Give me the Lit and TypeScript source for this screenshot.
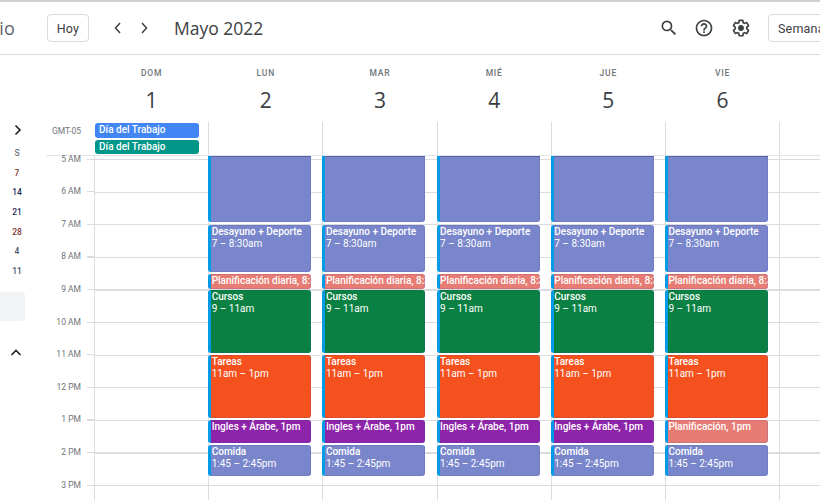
import { LitElement, html, css } from "lit";
import { customElement } from "lit/decorators.js";

const HOUR = 32.6;
const BLUE = "#7986cb", RED = "#e67c73", GREEN = "#0b8043", ORANGE = "#f4511e", PURPLE = "#8e24aa";
interface Ev { top: number; h: number; c: string; t: string; s?: string; flat?: boolean; }
const base: Ev[] = [
  { top: 0, h: 66, c: BLUE, t: "", flat: true },
  { top: 69, h: 47, c: BLUE, t: "Desayuno + Deporte", s: "7 – 8:30am" },
  { top: 118, h: 15, c: RED, t: "Planificación diaria, 8:30am" },
  { top: 134, h: 63, c: GREEN, t: "Cursos", s: "9 – 11am" },
  { top: 199, h: 63, c: ORANGE, t: "Tareas", s: "11am – 1pm" },
  { top: 264, h: 23, c: PURPLE, t: "Ingles + Árabe, 1pm" },
  { top: 289, h: 31, c: BLUE, t: "Comida", s: "1:45 – 2:45pm" },
];
const days = [
  { n: "DOM", d: 1 }, { n: "LUN", d: 2 }, { n: "MAR", d: 3 },
  { n: "MIÉ", d: 4 }, { n: "JUE", d: 5 }, { n: "VIE", d: 6 },
];
const hours = ["5 AM","6 AM","7 AM","8 AM","9 AM","10 AM","11 AM","12 PM","1 PM","2 PM","3 PM"];
const mini = [
  { t: "S", c: "head" }, { t: "7", c: "r" }, { t: "14", c: "b" }, { t: "21", c: "b" },
  { t: "28", c: "r" }, { t: "4", c: "m" }, { t: "11", c: "m" },
];

@customElement("app-root")
export class AppRoot extends LitElement {
  static styles = css`
    :host { display: block; width: 820px; height: 500px; overflow: hidden; background: #fff; font-family: Roboto, "Liberation Sans", sans-serif; color: #3c4043; }
    .top { height: 52px; border-top: 2px solid #d0d0d0; border-bottom: 1px solid #dadce0; display: flex; align-items: center; overflow: hidden; }
    .brand { width: 47px; flex: none; overflow: hidden; white-space: nowrap; color: #5f6368; font: 400 18px "Open Sans", sans-serif; }
    .brandin { display: block; margin-left: -8px; }
    .hoy { width: 42px; height: 28px; flex: none; box-sizing: border-box; border: 1px solid #dadce0; border-radius: 4px; display: flex; align-items: center; justify-content: center; font-size: 12.5px; font-weight: 400; letter-spacing: .2px; color: #3c4043; }
    .navs { display: flex; gap: 10px; margin-left: 21px; flex: none; }
    .navs svg { width: 16px; height: 16px; display: block; }
    .title { font: 400 17.5px "Open Sans", Roboto, sans-serif; color: #3c4043; margin-left: 22px; flex: none; }
    .spacer { flex: 1; }
    .tools { display: flex; align-items: center; gap: 15px; flex: none; }
    .tools svg { display: block; }
    .tools svg:last-child { margin-left: 2px; }
    .week { margin-left: 17px; margin-right: -31px; width: 72px; height: 26px; border: 1px solid #dadce0; border-radius: 4px; flex: none; display: flex; align-items: center; padding-left: 9px; font-size: 12.5px; font-weight: 400; letter-spacing: .2px; color: #3c4043; white-space: nowrap; }
    .body { display: flex; height: 445px; }
    .side { width: 46px; flex: none; display: flex; flex-direction: column; align-items: stretch; }
    .sideChev { height: 19.5px; margin-top: 65px; display: flex; justify-content: center; padding-right: 10px; align-items: center; }
    .miniRow { height: 19.6px; width: 18px; margin-left: 8px; display: flex; align-items: center; justify-content: center; font-size: 8.5px; font-weight: 500; color: #3c4043; }
    .miniRow.head { color: #70757a; margin-top: 4px; }
    .miniRow.r { color: #80332c; }
    .miniRow.b { color: #1f2c55; }
    .miniRow.m { color: #4a5568; }
    .pill { width: 25px; height: 29.5px; background: #f1f3f4; border-radius: 0 4px 4px 0; margin-top: 11.3px; }
    .chevUp { margin-top: 24px; height: 16px; display: flex; padding-left: 9px; align-items: center; }
    .main { flex: 1; display: flex; flex-direction: column; min-width: 0; }
    .heads { display: flex; height: 67px; padding-left: 48px; flex: none; }
    .dh { width: 114.2px; flex: none; display: flex; flex-direction: column; align-items: center; color: #70757a; padding-left: 1px; box-sizing: border-box; }
    .dh .n { font-size: 8.5px; font-weight: 500; letter-spacing: .8px; margin-top: 13px; line-height: 10px; }
    .dh .d { font: 400 21px/26px "Open Sans", Roboto, sans-serif; color: #3c4043; margin-top: 9px; }
    .allday { display: flex; height: 33px; flex: none; align-items: stretch; }
    .gmt { width: 35px; flex: none; font-size: 8.5px; color: #70757a; text-align: right; line-height: 16px; padding-top: 1px; box-sizing: border-box; }
    .adcols { display: flex; margin-left: 13px; flex: 1; }
    .adcol { width: 114.2px; flex: none; box-sizing: border-box; border-left: 1px solid #dadce0; display: flex; flex-direction: column; gap: 2px; padding-top: 1px; }
    .adcol:first-child { border-left-color: transparent; }
    .ad { width: 104px; height: 14.5px; border-radius: 3px; color: #fff; font-size: 10px; font-weight: 500; line-height: 14.5px; padding-left: 4px; box-sizing: border-box; }
    .grid { flex: 1; display: flex; min-height: 0; border-top: 1px solid #e3e4e7; }
    .gut { width: 48px; flex: none; padding-top: 2.6px; }
    .hr { height: ${HOUR}px; box-sizing: border-box; display: flex; align-items: flex-start; }
    .hr span { display: block; width: 35px; text-align: right; font-size: 8.5px; color: #70757a; line-height: 10px; margin-top: -5px; }
    .hr i { display: block; width: 7px; height: 1.2px; background: #dadce0; margin-left: 6px; }
    .cols { flex: 1; display: flex; }
    .col { width: 114.2px; flex: none; box-sizing: border-box; border-left: 1px solid #dadce0; position: relative; background-image: repeating-linear-gradient(to bottom, #dadce0 0, #dadce0 1.2px, transparent 1.2px, transparent ${HOUR}px); background-position: 0 2.6px; background-repeat: no-repeat; }
    .ev { position: absolute; left: -1px; width: 103px; box-sizing: border-box; border-left: 3px solid #039be5; border-radius: 3px; color: #fff; font-size: 10px; font-weight: 500; line-height: 12px; padding: 1px 0 0 .5px; overflow: hidden; white-space: nowrap; box-shadow: inset -1px -1px 0 rgba(50, 60, 190, .12), inset 0 1px 0 rgba(40, 40, 120, .12); }
    .ev.flat { border-radius: 0 0 3px 3px; box-shadow: inset -1px -1px 0 rgba(50, 60, 190, .12), inset 0 1px 0 rgba(30, 30, 110, .35); }
    .ev .s { font-weight: 400; display: block; }
    .ev .t { display: block; }
  `;

  private chevron(left: boolean) {
    return html`<svg viewBox="0 0 16 16"><path d="${left ? "M10 3 L5.5 8 L10 13" : "M6 3 L10.5 8 L6 13"}" fill="none" stroke="#3c4043" stroke-width="1.5"/></svg>`;
  }

  private renderEv(e: Ev) {
    return html`<div class="ev ${e.flat ? "flat" : ""}" style="top:${e.top}px;height:${e.h}px;background:${e.c}">
      ${e.t ? html`<span class="t">${e.t}</span>` : ""}${e.s ? html`<span class="s">${e.s}</span>` : ""}
    </div>`;
  }

  render() {
    return html`
      <div class="top">
        <div class="brand"><span class="brandin">rio</span></div>
        <div class="hoy">Hoy</div>
        <div class="navs">${this.chevron(true)}${this.chevron(false)}</div>
        <div class="title">Mayo 2022</div>
        <div class="spacer"></div>
        <div class="tools">
          <svg width="20" height="20" viewBox="0 0 24 24" fill="#3c4043"><path d="M15.5 14h-.79l-.28-.27A6.47 6.47 0 0 0 16 9.5 6.5 6.5 0 1 0 9.5 16c1.61 0 3.09-.59 4.23-1.57l.27.28v.79l5 4.99L20.49 19l-4.99-5zm-6 0C7.01 14 5 11.99 5 9.5S7.01 5 9.5 5 14 7.01 14 9.5 11.99 14 9.5 14z"/></svg>
          <svg width="20" height="20" viewBox="0 0 24 24" fill="#3c4043"><path d="M11 18h2v-2h-2v2zm1-16C6.48 2 2 6.48 2 12s4.48 10 10 10 10-4.48 10-10S17.52 2 12 2zm0 18c-4.41 0-8-3.59-8-8s3.59-8 8-8 8 3.59 8 8-3.59 8-8 8zm0-14c-2.21 0-4 1.79-4 4h2c0-1.1.9-2 2-2s2 .9 2 2c0 2-3 1.75-3 5h2c0-2.25 3-2.5 3-5 0-2.21-1.79-4-4-4z"/></svg>
          <svg width="20" height="20" viewBox="0 0 24 24" fill="#3c4043"><path d="M13.85 22.25h-3.7c-.74 0-1.36-.54-1.45-1.27l-.27-1.89c-.27-.14-.53-.29-.79-.46l-1.8.72c-.7.26-1.47-.03-1.81-.65L2.2 15.53c-.35-.66-.2-1.44.36-1.88l1.53-1.19c-.01-.15-.02-.3-.02-.46 0-.15.01-.31.02-.46l-1.52-1.19c-.59-.45-.74-1.26-.37-1.88l1.85-3.19c.34-.62 1.11-.9 1.79-.63l1.81.73c.26-.17.52-.32.78-.46l.27-1.91c.09-.7.71-1.25 1.44-1.25h3.7c.74 0 1.36.54 1.45 1.27l.27 1.89c.27.14.53.29.79.46l1.8-.72c.71-.26 1.48.03 1.82.65l1.84 3.18c.36.66.2 1.44-.36 1.88l-1.52 1.19c.01.15.02.3.02.46s-.01.31-.02.46l1.52 1.19c.56.45.72 1.23.37 1.86l-1.86 3.22c-.34.62-1.11.9-1.8.63l-1.8-.72c-.26.17-.52.32-.78.46l-.27 1.91c-.1.68-.72 1.22-1.46 1.22zm-3.23-2h2.76l.37-2.55.53-.22c.44-.18.88-.44 1.34-.78l.45-.34 2.38.96 1.38-2.4-2.03-1.58.07-.56c.03-.26.06-.51.06-.78s-.03-.53-.06-.78l-.07-.56 2.03-1.58-1.39-2.4-2.39.96-.45-.35c-.42-.32-.87-.58-1.33-.77l-.52-.22-.37-2.55h-2.76l-.37 2.55-.53.21c-.44.19-.88.44-1.34.79l-.45.33-2.38-.95-1.39 2.39 2.03 1.58-.07.56a7 7 0 0 0-.06.79c0 .26.02.53.06.78l.07.56-2.03 1.58 1.38 2.4 2.39-.96.45.35c.43.33.86.58 1.33.77l.53.22.38 2.55z"/><circle cx="12" cy="12" r="3.5"/></svg>
        </div>
        <div class="week">Semana</div>
      </div>
      <div class="body">
        <div class="side">
          <div class="sideChev"><svg width="12" height="12" viewBox="0 0 12 12"><path d="M3.5 1.5 L8 6 L3.5 10.5" fill="none" stroke="#202124" stroke-width="1.6"/></svg></div>
          ${mini.map((m) => html`<div class="miniRow ${m.c}">${m.t}</div>`)}
          <div class="pill"></div>
          <div class="chevUp"><svg width="14" height="10" viewBox="0 0 14 10"><path d="M2.5 7 L7 2.5 L11.5 7" fill="none" stroke="#202124" stroke-width="1.6"/></svg></div>
        </div>
        <div class="main">
          <div class="heads">
            ${days.map((d) => html`<div class="dh"><div class="n">${d.n}</div><div class="d">${d.d}</div></div>`)}
          </div>
          <div class="allday">
            <div class="gmt">GMT-05</div>
            <div class="adcols">
              <div class="adcol">
                <div class="ad" style="background:#4285f4">Día del Trabajo</div>
                <div class="ad" style="background:#009688">Día del Trabajo</div>
              </div>
              ${[1,2,3,4,5,6].map(() => html`<div class="adcol"></div>`)}
            </div>
          </div>
          <div class="grid">
            <div class="gut">${hours.map((h) => html`<div class="hr"><span>${h}</span><i></i></div>`)}</div>
            <div class="cols">
              ${days.map((_, i) => html`<div class="col">
                ${i === 0 ? "" : base.map((e) => this.renderEv(i === 5 && e.c === PURPLE ? { ...e, c: RED, t: "Planificación, 1pm" } : e))}
              </div>`)}
              <div class="col"></div>
            </div>
          </div>
        </div>
      </div>
    `;
  }
}
